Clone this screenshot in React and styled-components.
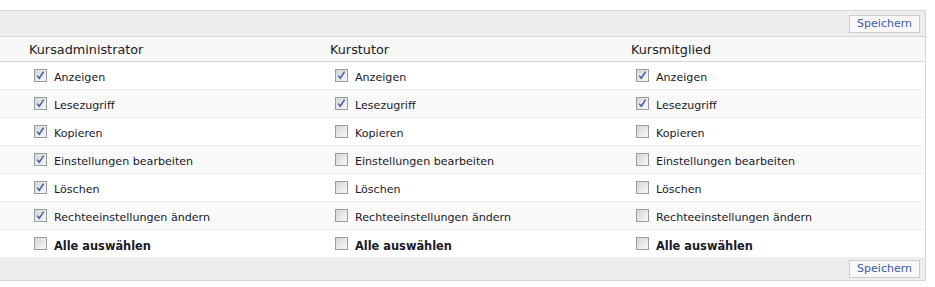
import styled, { createGlobalStyle } from "styled-components";

const GlobalStyle = createGlobalStyle`
  body {
    margin: 0;
    background: #fff;
    font-family: Verdana, "DejaVu Sans", sans-serif;
  }
`;

const roles = ["Kursadministrator", "Kurstutor", "Kursmitglied"];

const perms = [
  { label: "Anzeigen", checked: [true, true, true] },
  { label: "Lesezugriff", checked: [true, true, true] },
  { label: "Kopieren", checked: [true, false, false] },
  { label: "Einstellungen bearbeiten", checked: [true, false, false] },
  { label: "Löschen", checked: [true, false, false] },
  { label: "Rechteeinstellungen ändern", checked: [true, false, false] },
];

const Page = styled.div`
  padding-top: 10px;
  width: 926px;
`;

const Panel = styled.div`
  border-right: 1px solid #d6d6d6;
`;

const ActionBar = styled.div`
  height: ${(p) => p.h}px;
  background: #eeeeee;
  border-top: ${(p) => (p.top ? "1px solid #d6d6d6" : "none")};
  border-bottom: 1px solid #d6d6d6;
  display: flex;
  align-items: center;
  justify-content: flex-end;
  padding-right: 5px;
`;

const SaveButton = styled.button`
  height: 18px;
  padding: 0 7px;
  background: #f8f8f8;
  border: 1px solid #cccccc;
  color: #3b5ba5;
  font-family: Verdana, "DejaVu Sans", sans-serif;
  font-size: 11px;
  line-height: 16px;
  cursor: pointer;
`;

const Row = styled.div`
  display: grid;
  grid-template-columns: 301px 301px 1fr;
  height: ${(p) => p.h}px;
  background: ${(p) => p.bg};
  border-bottom: ${(p) => (p.last ? "none" : "1px solid #ececec")};
`;

const HeadRow = styled(Row)`
  border-bottom: 1px solid #d6d6d6;
`;

const HeadCell = styled.div`
  padding-left: 29px;
  display: flex;
  align-items: center;
  font-size: 12.8px;
  color: #222;
`;

const Cell = styled.label`
  padding-left: 34px;
  display: flex;
  align-items: center;
  gap: 7px;
  font-size: ${(p) => (p.bold ? "11.4px" : "11.1px")};
  color: #1a1a2a;
  font-weight: ${(p) => (p.bold ? "bold" : "normal")};
`;

const Label = styled.span`
  padding-top: 4px;
`;

const Box = ({ checked }) => (
  <svg width="13" height="13" viewBox="0 0 13 13">
    <defs>
      <linearGradient id="cbg" x1="0" y1="0" x2="1" y2="1">
        <stop offset="0" stopColor="#d4d4d4" />
        <stop offset="1" stopColor="#fafafa" />
      </linearGradient>
    </defs>
    <rect x="0.5" y="0.5" width="12" height="12" fill="url(#cbg)" stroke="#9a9b9b" />
    {checked && (
      <path d="M3.2 6.6 L5.3 9.2 L9.6 2.6" fill="none" stroke="#3a58a6" strokeWidth="1.4" />
    )}
  </svg>
);

export default function App() {
  return (
    <Page>
      <GlobalStyle />
      <Panel>
        <ActionBar top h={25}>
          <SaveButton>Speichern</SaveButton>
        </ActionBar>
        <HeadRow h={24} bg="#f7f7f7">
          {roles.map((r) => (
            <HeadCell key={r}>{r}</HeadCell>
          ))}
        </HeadRow>
        {perms.map((p, i) => (
          <Row key={p.label} h={27} bg={i % 2 ? "#f9f9f9" : "#fff"}>
            {p.checked.map((c, j) => (
              <Cell key={j}>
                <Box checked={c} />
                <Label>{p.label}</Label>
              </Cell>
            ))}
          </Row>
        ))}
        <Row h={27} bg="#fff" last>
          {roles.map((r) => (
            <Cell key={r} bold>
              <Box checked={false} />
              <Label>Alle auswählen</Label>
            </Cell>
          ))}
        </Row>
        <ActionBar h={23}>
          <SaveButton>Speichern</SaveButton>
        </ActionBar>
      </Panel>
    </Page>
  );
}
